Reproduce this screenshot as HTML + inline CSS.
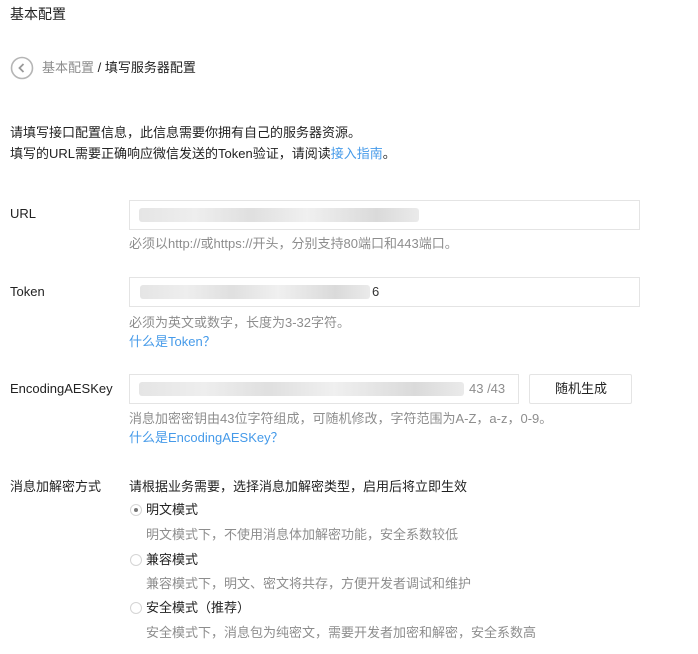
<!DOCTYPE html>
<html><head><meta charset="utf-8"><style>
*{margin:0;padding:0;box-sizing:border-box}
body{width:698px;height:654px;background:#fff;font-family:"Liberation Sans","Noto Sans CJK SC",sans-serif;font-size:13px;color:#222;position:relative;overflow:hidden}
.a{position:absolute;white-space:nowrap;line-height:18px}
.g{color:#8d8d8d}
.l{color:#459ae9}
.box{position:absolute;border:1px solid #e4e4e4;background:#fff}
.blur{position:absolute;height:14px;background:linear-gradient(90deg,#e2e2e2,#ececec 20%,#dcdcdc 40%,#eee 60%,#d6d6d6 85%,#e8e8e8);opacity:.9;border-radius:3px}
.r{position:absolute;width:12px;height:12px;border:1px solid #d5d5d5;border-radius:50%;background:#fff}
</style></head><body>
<div class="a" style="left:10px;top:5px;font-size:14px">基本配置</div>
<svg class="a" style="left:10px;top:56px" width="24" height="24"><circle cx="12" cy="12" r="10.5" fill="none" stroke="#b5b5b5" stroke-width="1.6"/><path d="M13.5 8 L9.5 12 L13.5 16" fill="none" stroke="#999" stroke-width="1.8"/></svg>
<div class="a" style="left:42px;top:59px"><span class="g">基本配置</span> / 填写服务器配置</div>
<div class="a" style="left:10px;top:124px">请填写接口配置信息，此信息需要你拥有自己的服务器资源。</div>
<div class="a" style="left:10px;top:145px">填写的URL需要正确响应微信发送的Token验证，请阅读<span class="l">接入指南</span>。</div>

<div class="a" style="left:10px;top:205px">URL</div>
<div class="box" style="left:129px;top:200px;width:511px;height:30px"></div>
<div class="blur" style="left:139px;top:208px;width:280px"></div>
<div class="a g" style="left:129px;top:235px">必须以http://或https://开头，分别支持80端口和443端口。</div>

<div class="a" style="left:10px;top:283px">Token</div>
<div class="box" style="left:129px;top:277px;width:511px;height:30px"></div>
<div class="blur" style="left:140px;top:285px;width:230px"></div>
<div class="a" style="left:372px;top:283px;color:#333">6</div>
<div class="a g" style="left:129px;top:314px">必须为英文或数字，长度为3-32字符。</div>
<div class="a l" style="left:129px;top:333px">什么是Token？</div>

<div class="a" style="left:10px;top:380px">EncodingAESKey</div>
<div class="box" style="left:129px;top:374px;width:390px;height:30px"></div>
<div class="blur" style="left:139px;top:382px;width:325px"></div>
<div class="a g" style="left:469px;top:380px">43 /43</div>
<div class="box" style="left:529px;top:374px;width:103px;height:30px;border-radius:2px"></div>
<div class="a" style="left:555px;top:380px">随机生成</div>
<div class="a g" style="left:129px;top:410px">消息加密密钥由43位字符组成，可随机修改，字符范围为A-Z，a-z，0-9。</div>
<div class="a l" style="left:129px;top:429px">什么是EncodingAESKey？</div>

<div class="a" style="left:10px;top:478px">消息加解密方式</div>
<div class="a" style="left:129px;top:478px">请根据业务需要，选择消息加解密类型，启用后将立即生效</div>
<div class="r" style="left:130px;top:504px"><div style="position:absolute;left:3px;top:3px;width:4px;height:4px;border-radius:50%;background:#777"></div></div>
<div class="a" style="left:146px;top:501px">明文模式</div>
<div class="a g" style="left:146px;top:526px">明文模式下，不使用消息体加解密功能，安全系数较低</div>
<div class="r" style="left:130px;top:554px"></div>
<div class="a" style="left:146px;top:551px">兼容模式</div>
<div class="a g" style="left:146px;top:575px">兼容模式下，明文、密文将共存，方便开发者调试和维护</div>
<div class="r" style="left:130px;top:602px"></div>
<div class="a" style="left:146px;top:599px">安全模式（推荐）</div>
<div class="a g" style="left:146px;top:624px">安全模式下，消息包为纯密文，需要开发者加密和解密，安全系数高</div>
</body></html>
